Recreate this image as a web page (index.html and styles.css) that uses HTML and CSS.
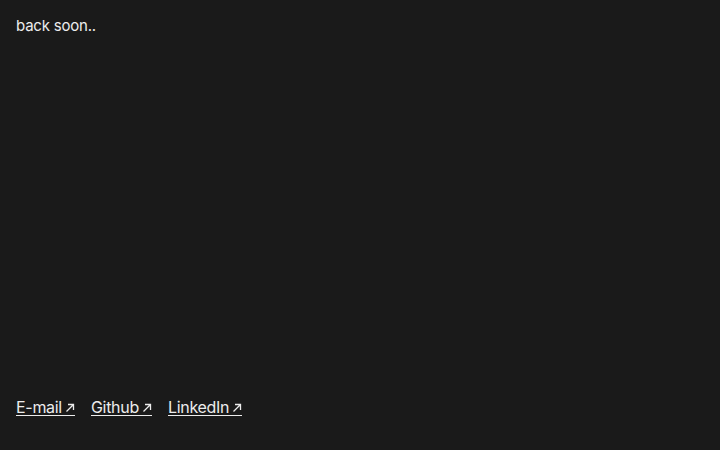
FILE: index.html
```html
<!DOCTYPE html>
<html lang="en">
<head>
<meta charset="utf-8">
<title>back soon..</title>
<link rel="stylesheet" href="styles.css">
</head>
<body>
<main class="page">
  <p class="status">back soon..</p>
  <footer class="links">
    <a class="link" href="#">E-mail<svg class="arrow" viewBox="0 0 10 10" width="10" height="10"><path d="M1.5 8.5 L8.5 1.5 M3 1.5 H8.5 V7" fill="none" stroke="currentColor" stroke-width="1.3"/></svg></a>
    <a class="link" href="#">Github<svg class="arrow" viewBox="0 0 10 10" width="10" height="10"><path d="M1.5 8.5 L8.5 1.5 M3 1.5 H8.5 V7" fill="none" stroke="currentColor" stroke-width="1.3"/></svg></a>
    <a class="link" href="#">LinkedIn<svg class="arrow" viewBox="0 0 10 10" width="10" height="10"><path d="M1.5 8.5 L8.5 1.5 M3 1.5 H8.5 V7" fill="none" stroke="currentColor" stroke-width="1.3"/></svg></a>
  </footer>
</main>
</body>
</html>
```

FILE: styles.css
```css
html, body {
  margin: 0;
  padding: 0;
  background: #1a1a1a;
}
.page {
  box-sizing: border-box;
  height: 100vh;
  padding: 16px 16px 34px;
  display: flex;
  flex-direction: column;
  justify-content: space-between;
  color: #ececec;
  font-family: Inter, "Liberation Sans", sans-serif;
}
.status {
  margin: 0;
  font-size: 15px;
  line-height: 20px;
  letter-spacing: -0.2px;
}
.links {
  display: flex;
  gap: 16px;
  font-size: 16px;
  letter-spacing: -0.3px;
}
.link {
  color: #ececec;
  text-decoration: none;
  display: inline-flex;
  align-items: center;
  gap: 3px;
  line-height: 16px;
  border-bottom: 1px solid #ececec;
}
.arrow {
  display: block;
  margin-top: 2px;
}
```
